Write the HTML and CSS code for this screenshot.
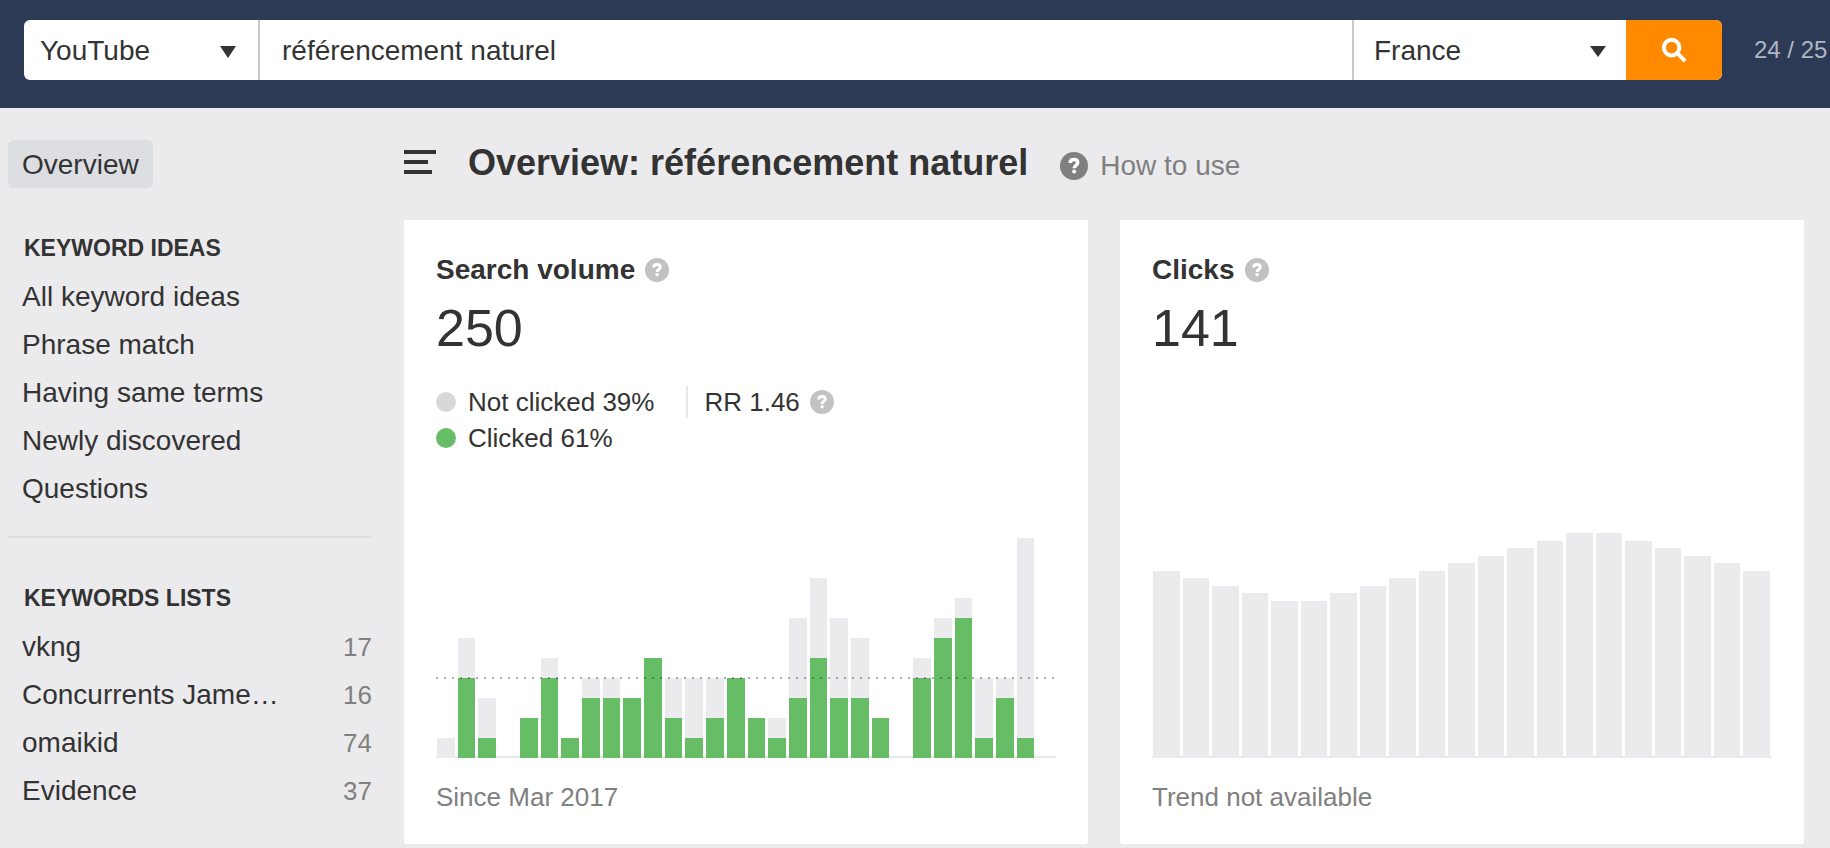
FILE: index.html
```html
<!DOCTYPE html>
<html lang="en">
<head>
<meta charset="utf-8">
<title>Overview: référencement naturel</title>
<meta name="viewport" content="width=device-width, initial-scale=1">
<link rel="stylesheet" href="styles.css">
</head>
<body>
<svg class="sprite" aria-hidden="true">
  <symbol id="help" viewBox="0 0 24 24">
    <circle cx="12" cy="12" r="12" fill="currentColor"/>
    <path class="help-mark" d="M8.7 9.4C8.7 7.6 10 6.5 12 6.5s3.2 1 3.2 2.6c0 2.3-3.1 2.3-3.1 4.9"/>
    <circle class="help-dot" cx="12.1" cy="16.8" r="1.7"/>
  </symbol>
</svg>

<header class="topbar">
  <form class="search">
    <div class="select select-engine">
      <select aria-label="Search engine"><option>YouTube</option><option>Google</option></select>
      <svg class="arrow" viewBox="0 0 16 12" aria-hidden="true"><path d="M0 0h16L8 12z"/></svg>
    </div>
    <input class="query" type="text" aria-label="Keyword" value="référencement naturel">
    <div class="select select-country">
      <select aria-label="Country"><option>France</option><option>Belgium</option></select>
      <svg class="arrow" viewBox="0 0 16 12" aria-hidden="true"><path d="M0 0h16L8 11z"/></svg>
    </div>
    <button class="submit" type="button" aria-label="Search">
      <svg viewBox="0 0 26 26" aria-hidden="true"><circle cx="10.6" cy="10.6" r="7.8"/><path d="M16.2 16.2l8 8"/></svg>
    </button>
  </form>
  <span class="quota">24 / 25</span>
</header>

<div class="layout">
  <nav class="sidebar">
    <a class="item item-active" href="#">Overview</a>
    <section class="group">
      <h2 class="group-title">KEYWORD IDEAS</h2>
      <a class="item" href="#">All keyword ideas</a>
      <a class="item" href="#">Phrase match</a>
      <a class="item" href="#">Having same terms</a>
      <a class="item" href="#">Newly discovered</a>
      <a class="item" href="#">Questions</a>
    </section>
    <hr class="rule">
    <section class="group">
      <h2 class="group-title">KEYWORDS LISTS</h2>
      <a class="item" href="#">vkng <span class="count">17</span></a>
      <a class="item" href="#">Concurrents Jame… <span class="count">16</span></a>
      <a class="item" href="#">omaikid <span class="count">74</span></a>
      <a class="item" href="#">Evidence <span class="count">37</span></a>
    </section>
  </nav>

  <main class="main">
    <div class="heading">
      <button class="menu" type="button" aria-label="Toggle menu">
        <svg viewBox="0 0 32 24" aria-hidden="true"><path d="M0 0h32v4H0zM0 10h24v4H0zM0 20h28v4H0z"/></svg>
      </button>
      <h1>Overview: référencement naturel</h1>
      <a class="howto" href="#"><svg aria-hidden="true"><use href="#help"/></svg>How to use</a>
    </div>

    <div class="cards">
      <section class="card">
        <h2 class="card-title">Search volume <svg class="tip" aria-hidden="true"><use href="#help"/></svg></h2>
        <p class="value">250</p>
        <div class="legend">
          <div class="legend-row">
            <span class="key"><i class="dot"></i>Not clicked 39%</span>
            <span class="rate">RR 1.46 <svg class="tip" aria-hidden="true"><use href="#help"/></svg></span>
          </div>
          <div class="legend-row">
            <span class="key"><i class="dot dot-clicked"></i>Clicked 61%</span>
          </div>
        </div>
        <div class="chart chart-volume">
          <div class="bar" style="height:20px"></div>
          <div class="bar" style="height:120px"><b style="height:80px"></b></div>
          <div class="bar" style="height:60px"><b style="height:20px"></b></div>
          <div class="bar" style="height:0"></div>
          <div class="bar" style="height:40px"><b style="height:40px"></b></div>
          <div class="bar" style="height:100px"><b style="height:80px"></b></div>
          <div class="bar" style="height:20px"><b style="height:20px"></b></div>
          <div class="bar" style="height:80px"><b style="height:60px"></b></div>
          <div class="bar" style="height:80px"><b style="height:60px"></b></div>
          <div class="bar" style="height:60px"><b style="height:60px"></b></div>
          <div class="bar" style="height:100px"><b style="height:100px"></b></div>
          <div class="bar" style="height:80px"><b style="height:40px"></b></div>
          <div class="bar" style="height:80px"><b style="height:20px"></b></div>
          <div class="bar" style="height:80px"><b style="height:40px"></b></div>
          <div class="bar" style="height:80px"><b style="height:80px"></b></div>
          <div class="bar" style="height:40px"><b style="height:40px"></b></div>
          <div class="bar" style="height:40px"><b style="height:20px"></b></div>
          <div class="bar" style="height:140px"><b style="height:60px"></b></div>
          <div class="bar" style="height:180px"><b style="height:100px"></b></div>
          <div class="bar" style="height:140px"><b style="height:60px"></b></div>
          <div class="bar" style="height:120px"><b style="height:60px"></b></div>
          <div class="bar" style="height:40px"><b style="height:40px"></b></div>
          <div class="bar" style="height:0"></div>
          <div class="bar" style="height:100px"><b style="height:80px"></b></div>
          <div class="bar" style="height:140px"><b style="height:120px"></b></div>
          <div class="bar" style="height:160px"><b style="height:140px"></b></div>
          <div class="bar" style="height:80px"><b style="height:20px"></b></div>
          <div class="bar" style="height:80px"><b style="height:60px"></b></div>
          <div class="bar" style="height:220px"><b style="height:20px"></b></div>
          <div class="bar" style="height:0"></div>
        </div>
        <p class="note">Since Mar 2017</p>
      </section>

      <section class="card">
        <h2 class="card-title">Clicks <svg class="tip" aria-hidden="true"><use href="#help"/></svg></h2>
        <p class="value">141</p>
        <div class="chart chart-clicks">
          <div class="bar" style="height:187px"></div>
          <div class="bar" style="height:180px"></div>
          <div class="bar" style="height:172px"></div>
          <div class="bar" style="height:165px"></div>
          <div class="bar" style="height:157px"></div>
          <div class="bar" style="height:157px"></div>
          <div class="bar" style="height:165px"></div>
          <div class="bar" style="height:172px"></div>
          <div class="bar" style="height:180px"></div>
          <div class="bar" style="height:187px"></div>
          <div class="bar" style="height:195px"></div>
          <div class="bar" style="height:202px"></div>
          <div class="bar" style="height:210px"></div>
          <div class="bar" style="height:217px"></div>
          <div class="bar" style="height:225px"></div>
          <div class="bar" style="height:225px"></div>
          <div class="bar" style="height:217px"></div>
          <div class="bar" style="height:210px"></div>
          <div class="bar" style="height:202px"></div>
          <div class="bar" style="height:195px"></div>
          <div class="bar" style="height:187px"></div>
        </div>
        <p class="note">Trend not available</p>
      </section>
    </div>
  </main>
</div>
</body>
</html>
```

FILE: styles.css
```css
* { box-sizing: border-box; }

body {
  margin: 0;
  background: #ebebed;
  color: #333;
  font: 28px/48px "Liberation Sans", Arial, sans-serif;
}

h1, h2, p { margin: 0; }
a { color: inherit; text-decoration: none; }
svg { display: block; flex: none; }
button { padding: 0; border: 0; cursor: pointer; }
select, input { font: inherit; color: inherit; }

.sprite { position: absolute; width: 0; height: 0; }
.help-mark { fill: none; stroke: #fff; stroke-width: 3; }
.help-dot { fill: #fff; }

/* Top bar */
.topbar {
  display: flex;
  align-items: center;
  gap: 32px;
  padding: 20px 0 28px 24px;
  background: #2d3a56;
}
.search {
  display: flex;
  flex: 1;
  min-width: 0;
  height: 60px;
  border-radius: 6px;
  overflow: hidden;
  background: #fff;
}
.select { display: grid; align-items: center; }
.select-engine { width: 236px; border-right: 2px solid #c9c9c9; }
.select-country { width: 274px; border-left: 2px solid #c9c9c9; }
.select > * { grid-area: 1 / 1; }
.select select {
  appearance: none;
  width: 100%;
  height: 60px;
  border: 0;
  background: none;
}
.select-engine select { padding: 2px 48px 0 16px; }
.select-country select { padding: 2px 48px 0 20px; }
.arrow {
  justify-self: end;
  width: 16px;
  height: 12px;
  margin: 4px 20px 0 0;
  fill: #333;
  pointer-events: none;
}
.select-engine .arrow { margin-right: 22px; }
.query {
  flex: 1;
  min-width: 0;
  padding: 2px 22px 0;
  border: 0;
  background: none;
}
.submit {
  display: grid;
  place-items: center;
  width: 96px;
  background: #ff8a00;
}
.submit svg {
  width: 26px;
  height: 26px;
  fill: none;
  stroke: #fff;
  stroke-width: 4;
}
.quota { flex: 0 0 76px; font-size: 24px; color: #b0b6c1; white-space: nowrap; }

/* Page columns */
.layout { display: flex; gap: 32px; padding: 32px 26px 0 8px; }
.sidebar { flex: 0 0 364px; }
.main { flex: 1; min-width: 0; }

.item {
  display: flex;
  justify-content: space-between;
  padding: 2px 0 0 14px;
  line-height: 46px;
}
.item-active {
  width: max-content;
  padding-right: 14px;
  border-radius: 6px;
  background: #dddee2;
}
.group { padding-top: 34px; }
.group-title { padding: 2px 0 0 16px; font-size: 23px; line-height: 48px; }
.count { font-size: 26px; color: #808080; }
.rule { height: 2px; margin: 24px 0 0; border: 0; background: #dddee0; }

.heading { display: flex; align-items: center; gap: 32px; height: 48px; margin-bottom: 32px; }
.heading h1 { padding-bottom: 2px; font-size: 36px; line-height: 46px; }
.menu { padding-bottom: 4px; background: none; }
.menu svg { width: 32px; height: 24px; fill: #333; }
.howto { display: flex; align-items: center; gap: 12px; padding-top: 4px; color: #808080; }
.howto svg { width: 28px; height: 28px; }

/* Cards */
.cards { display: grid; grid-template-columns: 1fr 1fr; gap: 32px; }
.card {
  display: flex;
  flex-direction: column;
  padding: 32px 32px 30px;
  border-radius: 2px;
  background: #fff;
  box-shadow: 0 2px 0 #dedee0;
}
.card-title { display: flex; align-items: center; gap: 10px; font-size: 28px; line-height: 36px; }
.tip { width: 24px; height: 24px; color: #c2c2c2; }
.value { margin-top: 8px; font-size: 52px; line-height: 64px; }
.legend { margin: 24px 0 60px; font-size: 26px; line-height: 36px; }
.legend-row { display: flex; align-items: center; gap: 32px; }
.key { display: flex; align-items: center; gap: 12px; }
.dot { width: 20px; height: 20px; border-radius: 50%; background: #d8d8d8; }
.dot-clicked { background: #67bd65; }
.rate {
  display: flex;
  align-items: center;
  gap: 10px;
  padding-left: 16px;
  border-left: 2px solid #e6e6e8;
  line-height: 32px;
}

.chart {
  position: relative;
  display: grid;
  grid-auto-flow: column;
  grid-auto-columns: 1fr;
  align-items: end;
  gap: 3px;
  height: 242px;
  margin-top: auto;
  background: linear-gradient(#e9e9eb, #e9e9eb) bottom / 100% 2px no-repeat;
}
.chart-volume { padding: 0 1px; }
.chart-clicks { padding: 0 2px 0 1px; }
.chart-volume::after {
  content: "";
  position: absolute;
  right: 0;
  bottom: 79px;
  left: 0;
  height: 2px;
  background: repeating-linear-gradient(90deg, rgba(0, 0, 0, .32) 0 2px, transparent 2px 8px);
}
.bar { display: flex; align-items: flex-end; background: #ebebed; }
.bar b { flex: 1; background: #67bd65; }
.note { margin-top: 22px; font-size: 26px; line-height: 34px; color: #808080; }
```
